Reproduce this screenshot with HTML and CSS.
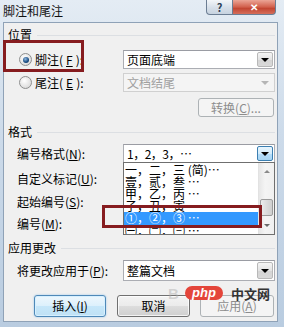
FILE: index.html
```html
<!DOCTYPE html>
<html lang="zh-CN">
<head>
  <meta charset="UTF-8">
  <title>脚注和尾注</title>
  <link rel="stylesheet" href="styles.css">
</head>
<body>
  <div class="window">
    <div class="titlebar">
      <span class="title">脚注和尾注</span>
      <div class="caption-btns">
        <span class="cap help">?</span>
        <span class="cap close">✕</span>
      </div>
    </div>

    <div class="panel">
      <div class="group g-pos">位置</div>
      <div class="row r-foot">
        <label class="opt"><span class="radio checked"></span>脚注(<u>F</u>):</label>
        <div class="select"><span>页面底端</span><i class="drop"></i></div>
      </div>
      <div class="row r-end">
        <label class="opt"><span class="radio"></span>尾注(<u>E</u>):</label>
        <div class="select disabled"><span>文档结尾</span><i class="drop"></i></div>
      </div>
      <div class="row r-convert">
        <button class="btn disabled convert">转换(<u>C</u>)...</button>
      </div>

      <div class="group g-fmt">格式</div>
      <div class="row r-numfmt">
        <span class="label">编号格式(<u>N</u>):</span>
        <div class="select"><span class="nums">1，2，3，…</span><i class="drop hot"></i></div>
      </div>
      <div class="row r-mark">
        <span class="label">自定义标记(<u>U</u>):</span>
      </div>
      <div class="row r-start">
        <span class="label">起始编号(<u>S</u>):</span>
      </div>
      <div class="row r-numbering">
        <span class="label">编号(<u>M</u>):</span>
      </div>

      <div class="group g-apply">应用更改</div>
      <div class="row r-apply">
        <span class="label">将更改应用于(<u>P</u>):</span>
        <div class="select tall"><span>整篇文档</span><i class="drop"></i></div>
      </div>

      <div class="actions">
        <button class="btn default">插入(<u>I</u>)</button>
        <button class="btn cancel">取消</button>
        <button class="btn disabled apply">应用(<u>A</u>)</button>
      </div>
    </div>

    <!-- open list of the number format box -->
    <div class="popup">
      <div class="items">
        <div class="item">一，二，三 (简)…</div>
        <div class="item">壹，贰，叁 …</div>
        <div class="item">甲，乙，丙 …</div>
        <div class="item">子，丑，寅 …</div>
        <div class="item selected">①，②，③ …</div>
        <div class="item">㈠，㈡，㈢ …</div>
      </div>
      <div class="scrollbar">
        <span class="arrow up"></span>
        <span class="thumb"></span>
        <span class="arrow down"></span>
      </div>
    </div>

    <div class="mark mark-foot"></div>
    <div class="mark mark-circle"></div>

    <div class="watermark">
      <span class="wm-b">B</span>
      <span class="wm-php">php</span>
      <span class="wm-cn">中文网</span>
    </div>
  </div>
</body>
</html>
```

FILE: styles.css
```css
* {
  box-sizing: border-box;
}
body {
  margin: 0;
  font-family: "Noto Sans CJK SC", "Noto Sans", sans-serif;
  font-size: 12px;
  color: #000;
}
u {
  text-decoration: underline;
}
.window {
  position: relative;
  width: 284px;
  height: 327px;
  background: linear-gradient(180deg, #e4ecf4 0%, #cddbea 40%, #b9cce0 100%);
  display: flex;
  flex-direction: column;
  overflow: hidden;
}
.titlebar {
  height: 22px;
  display: flex;
  align-items: flex-start;
}
.title {
  padding: 3px 0 0 3px;
  line-height: 15px;
  font-size: 12px;
  color: #111;
}
.caption-btns {
  margin-left: auto;
  margin-right: 8px;
  display: flex;
}
.cap {
  height: 15px;
  display: flex;
  align-items: center;
  justify-content: center;
  border: 1px solid #6b7d93;
  border-top: none;
  font-size: 11px;
  line-height: 1;
}
.help {
  width: 27px;
  border-radius: 0 0 0 4px;
  background: linear-gradient(#f3f6f9, #d6dfe9 55%, #c7d3e0);
  color: #2d3e57;
  font-weight: bold;
}
.close {
  width: 43px;
  border-left: none;
  border-radius: 0 0 4px 0;
  background: linear-gradient(#eba596, #d2604c 50%, #c24632 60%, #d56e5b);
  color: #fff;
  font-weight: bold;
  font-size: 10px;
}
.panel {
  margin: 0 6px 0 3px;
  height: 300px;
  background: #f0f0f0;
  border: 1px solid #8fa2b7;
  display: flex;
  flex-direction: column;
}

/* group headings */
.group {
  height: 14px;
  display: flex;
  align-items: center;
  gap: 5px;
  padding: 0 2px 0 4px;
  line-height: 14px;
}
.group::after {
  content: "";
  flex: 1;
  height: 1px;
  background: #dcdfe3;
}
.g-pos { margin-top: 5px; }
.g-fmt { margin-top: 8px; }
.g-apply { margin-top: 8px; }

/* rows */
.row {
  display: flex;
  align-items: center;
  padding-left: 13px;
  height: 20px;
}
.r-foot, .r-end { padding-left: 15px; height: 19px; }
.r-foot { margin-top: 8px; }
.r-end { margin-top: 4px; }
.r-convert { margin-top: 6px; height: 19px; justify-content: flex-end; padding-right: 3px; }
.r-numfmt { margin-top: 5px; height: 19px; }
.r-mark { margin-top: 5px; }
.r-start { margin-top: 3px; }
.r-numbering { margin-top: 2px; }
.r-apply { margin-top: 5px; height: 21px; }

.label {
  width: 106px;
  white-space: nowrap;
}
.opt {
  width: 104px;
  display: flex;
  align-items: center;
  gap: 3px;
  white-space: nowrap;
}
.radio {
  width: 13px;
  height: 13px;
  border-radius: 50%;
  border: 1px solid #8e8f8f;
  background: radial-gradient(circle at 40% 35%, #ffffff, #dcdcdc 75%);
  display: flex;
  align-items: center;
  justify-content: center;
}
.radio.checked::after {
  content: "";
  width: 6px;
  height: 6px;
  border-radius: 50%;
  background: radial-gradient(circle at 40% 35%, #8fb8e0, #174a80 60%, #0c2c55);
}

/* combo boxes */
.select {
  width: 152px;
  height: 100%;
  background: #fff;
  border: 1px solid #abadb3;
  border-top-color: #9a9ca3;
  display: flex;
  align-items: center;
  padding-left: 3px;
  position: relative;
}
.select span {
  flex: 1;
  line-height: 16px;
  white-space: nowrap;
}
.select .nums {
  letter-spacing: -0.5px;
}
.drop {
  width: 16px;
  height: calc(100% - 2px);
  margin-right: 1px;
  border: 1px solid #b8b8b8;
  border-radius: 2px;
  background: linear-gradient(#f5f5f5, #e3e3e3 50%, #d4d4d4 51%, #d9d9d9);
  display: flex;
  align-items: center;
  justify-content: center;
}
.drop::after {
  content: "";
  border-left: 4px solid transparent;
  border-right: 4px solid transparent;
  border-top: 4px solid #000;
}
.drop.hot {
  border-color: #3c7fb1;
  background: linear-gradient(#e8f5fd, #d3ecfb 50%, #b6defa 51%, #a7d5f4);
}
.select.disabled {
  background: #f4f4f4;
  border-color: #d0d0d0;
  color: #a0a0a0;
}
.select.disabled .drop {
  border-color: transparent;
  background: transparent;
}
.select.disabled .drop::after {
  border-top-color: #b5b5b5;
}

/* push buttons */
.btn {
  height: 100%;
  font-family: inherit;
  font-size: 12px;
  color: #000;
  border: 1px solid #707070;
  border-radius: 3px;
  background: linear-gradient(#f3f3f3, #ebebeb 50%, #dddddd 51%, #cfcfcf);
  box-shadow: inset 0 0 0 1px rgba(255, 255, 255, 0.75);
  padding: 0;
  line-height: 1;
}
.btn.disabled {
  border-color: #adb2b5;
  background: #f4f4f4;
  color: #8c8c8c;
  box-shadow: none;
}
.convert { width: 76px; }
.actions {
  margin-top: 14px;
  height: 22px;
  display: flex;
  justify-content: flex-end;
  padding-right: 3px;
}
.btn.default {
  width: 72px;
  border-color: #4f89b8;
  background: linear-gradient(#eef7fd, #dcf0fc 50%, #c6e7fa 51%, #bfe1f5);
  box-shadow: inset 0 0 0 1px #d6f0ff, 0 0 2px #8cc3ea;
}
.btn.cancel { width: 73px; margin-left: 11px; }
.btn.apply { width: 74px; margin-left: 10px; }

/* open drop-down list */
.popup {
  position: absolute;
  left: 123px;
  top: 162px;
  width: 152px;
  height: 73px;
  border: 1px solid #6f6f6f;
  background: #fff;
  display: flex;
  overflow: hidden;
}
.items {
  flex: 1;
  padding-top: 1px;
}
.item {
  height: 12px;
  line-height: 12px;
  padding-left: 1px;
  font-size: 12px;
  white-space: nowrap;
}
.item.selected {
  background: #3399ff;
  color: #fff;
  height: 13px;
}
.scrollbar {
  width: 16px;
  background: linear-gradient(90deg, #e6e6e6, #f4f4f4 40%, #f0f0f0);
  border-left: 1px solid #e2e2e2;
  display: flex;
  flex-direction: column;
  align-items: center;
}
.arrow {
  width: 0;
  height: 0;
  border-left: 3px solid transparent;
  border-right: 3px solid transparent;
}
.arrow.up {
  margin-top: 7px;
  border-bottom: 3px solid #8a8a8a;
}
.thumb {
  margin-top: 26px;
  width: 13px;
  height: 17px;
  border: 1px solid #9b9b9b;
  border-radius: 2px;
  background: linear-gradient(90deg, #ececec, #dcdcdc 50%, #cfcfcf);
}
.arrow.down {
  margin-top: 8px;
  border-top: 3px solid #6a6a6a;
}

/* red annotation boxes drawn over the dialog */
.mark {
  position: absolute;
  border: 3px solid #861c1f;
}
.mark-foot {
  left: 3px;
  top: 40px;
  width: 81px;
  height: 32px;
}
.mark-circle {
  left: 102px;
  top: 205px;
  width: 160px;
  height: 23px;
}

/* site watermark */
.watermark {
  position: absolute;
  left: 168px;
  top: 285px;
  display: flex;
  align-items: center;
  height: 16px;
}
.wm-b {
  font-family: "Liberation Sans", sans-serif;
  font-size: 15px;
  font-weight: bold;
  color: rgba(170, 170, 170, 0.45);
  width: 17px;
}
.wm-php {
  width: 38px;
  height: 14px;
  border-radius: 7px;
  background: #e4453a;
  color: #fff;
  font-family: "Liberation Sans", sans-serif;
  font-style: italic;
  font-weight: bold;
  font-size: 13px;
  line-height: 14px;
  text-align: center;
}
.wm-cn {
  margin-left: 8px;
  font-size: 13px;
  font-weight: bold;
  color: #333;
}
```
